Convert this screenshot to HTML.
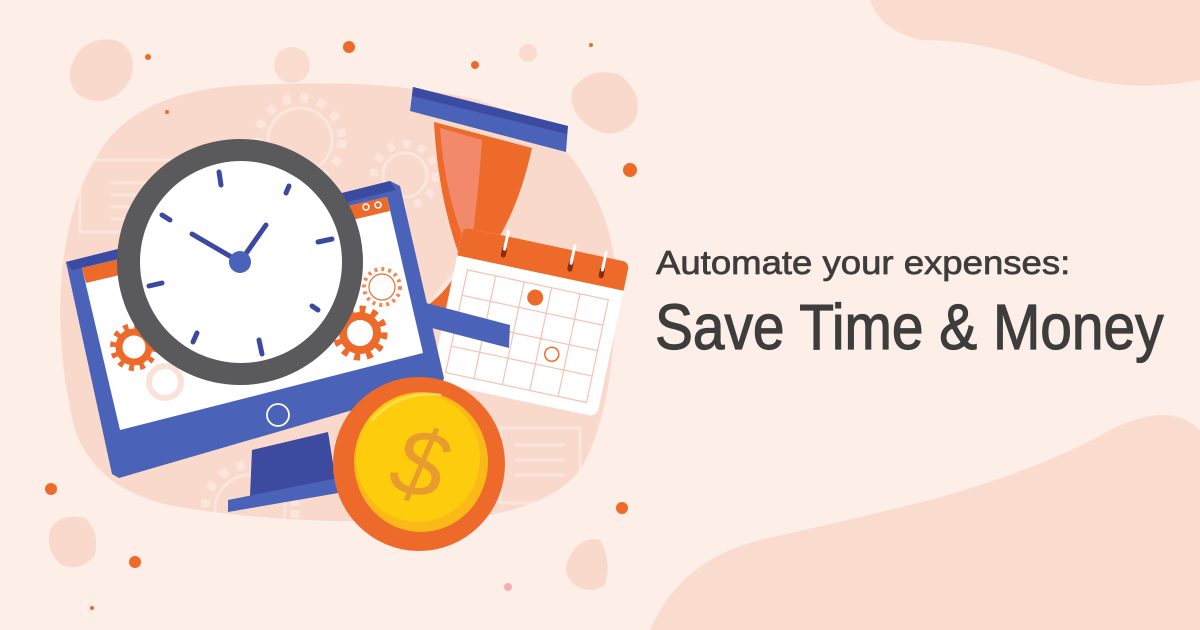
<!DOCTYPE html>
<html><head><meta charset="utf-8"><style>
html,body{margin:0;padding:0}
body{width:1200px;height:630px;background:#fdeee8;position:relative;overflow:hidden;font-family:"Liberation Sans",sans-serif}
svg{position:absolute;left:0;top:0}
.t1{position:absolute;left:656px;top:244px;font-size:33px;color:#3d3d3d;white-space:nowrap;transform-origin:0 0;transform:scaleX(1.107);-webkit-text-stroke:0.7px #3d3d3d}
.t2{position:absolute;left:655px;top:290px;font-size:64px;color:#3d3d3d;white-space:nowrap;transform-origin:0 0;transform:scaleX(0.888);-webkit-text-stroke:1.2px #3d3d3d}
</style></head><body>
<svg width="1200" height="630" viewBox="0 0 1200 630">
<path d="M870 0 L1200 0 L1200 80 Q1120 95 1060 70 Q990 40 920 40 Q880 30 870 0Z" fill="#fadccf"/>
<path d="M650 630 Q680 560 760 540 Q850 520 930 500 Q1040 470 1110 430 Q1170 400 1200 430 L1200 630Z" fill="#fadccf"/>
<path d="M95 160 Q130 90 250 85 Q360 80 420 90 Q520 100 565 150 Q625 220 615 320 Q610 420 580 470 Q540 520 420 520 Q300 525 200 510 Q100 500 75 430 Q55 350 62 270 Q70 200 95 160Z" fill="#f9d9cb"/>
<path d="M70 70 Q80 35 115 40 Q140 50 130 80 Q115 105 90 100 Q68 95 70 70Z" fill="#f9d9cb"/>
<path d="M572 90 Q590 65 620 75 Q645 95 635 120 Q620 140 595 130 Q568 115 572 90Z" fill="#f9d9cb"/>
<path d="M50 530 Q60 512 85 518 Q100 532 95 555 Q82 572 62 565 Q45 552 50 530Z" fill="#f9d9cb"/>
<path d="M568 560 Q580 535 600 540 Q612 560 605 585 Q590 595 575 585 Q562 575 568 560Z" fill="#f9d9cb"/>
<circle cx="292" cy="65" r="18" fill="#fadccf"/>
<circle cx="528" cy="53" r="9" fill="#fadccf"/>
<g fill="none" stroke="#fdeee8" stroke-width="3" opacity="0.6">
<rect x="80" y="160" width="92" height="72"/>
<line x1="110" y1="183" x2="160" y2="183"/><line x1="110" y1="195" x2="160" y2="195"/><line x1="110" y1="207" x2="160" y2="207"/><line x1="110" y1="219" x2="160" y2="219"/>
<rect x="500" y="428" width="80" height="75"/>
<line x1="515" y1="445" x2="565" y2="445"/><line x1="515" y1="460" x2="565" y2="460"/><line x1="515" y1="475" x2="565" y2="475"/>
<circle cx="300" cy="140" r="32"/><circle cx="300" cy="140" r="42" stroke-width="9" stroke-dasharray="8 10"/>
<circle cx="405" cy="175" r="22"/><circle cx="405" cy="175" r="31" stroke-width="8" stroke-dasharray="7 9"/>
<circle cx="250" cy="510" r="35"/><circle cx="250" cy="510" r="45" stroke-width="9" stroke-dasharray="8 10"/>
</g>
<g fill="#ee6a2b">
<circle cx="349" cy="47" r="6"/><circle cx="148" cy="57" r="3"/><circle cx="475" cy="65" r="4"/><circle cx="591" cy="45" r="2"/>
<circle cx="630" cy="170" r="7"/><circle cx="167" cy="112" r="2"/><circle cx="51" cy="489" r="6"/><circle cx="622" cy="508" r="6"/>
<circle cx="135" cy="562" r="6"/><circle cx="92" cy="608" r="2"/>
</g>
<circle cx="508" cy="587" r="4" fill="#f5b0b0"/>
<path d="M434 122 L532 148 Q515 225 480 263 L462 263 Q438 200 434 122Z" fill="#ee6a2b"/>
<path d="M440 128 L482 140 Q478 200 470 255 Q445 200 440 128Z" fill="#f2896b"/>
<path d="M462 262 L480 262 Q500 285 510 330 L424 310 Q440 285 462 262Z" fill="#fbe6de"/>
<path d="M462 262 L472 262 Q485 290 498 325 L424 308 Q450 290 462 262Z" fill="#ee6a2b"/>
<polygon points="413,87 568,126 566,152 410,111" fill="#4a62b8"/>
<polygon points="413,87 568,126 567,134 412,96" fill="#3b4ba2"/>
<g transform="translate(530 322) rotate(12)">
<rect x="-85" y="-79" width="170" height="158" rx="8" fill="#ffffff"/>
<path d="M-85 -71 Q-85 -79 -77 -79 L77 -79 Q85 -79 85 -71 L85 -50 L-85 -50Z" fill="#ee6a2b"/>
<g stroke="#f3c2b2" stroke-width="1.2" fill="none">
<rect x="-72" y="-38" width="144" height="105"/>
<line x1="-43" y1="-38" x2="-43" y2="67"/><line x1="-14" y1="-38" x2="-14" y2="67"/><line x1="14" y1="-38" x2="14" y2="67"/><line x1="43" y1="-38" x2="43" y2="67"/>
<line x1="-72" y1="-12" x2="72" y2="-12"/><line x1="-72" y1="14" x2="72" y2="14"/><line x1="-72" y1="40" x2="72" y2="40"/>
</g>
<circle cx="0" cy="-25" r="8" fill="#ee6a2b"/>
<circle cx="28" cy="27" r="7" fill="none" stroke="#ee6a2b" stroke-width="1.5"/>
<g stroke="#8a2a10" stroke-width="5" stroke-linecap="round"><line x1="-40" y1="-60" x2="-40" y2="-66"/><line x1="28" y1="-60" x2="28" y2="-66"/><line x1="60" y1="-60" x2="60" y2="-66"/></g>
<g stroke="#fff" stroke-width="3" stroke-linecap="round"><line x1="-40" y1="-66" x2="-40" y2="-84"/><line x1="28" y1="-66" x2="28" y2="-84"/><line x1="60" y1="-66" x2="60" y2="-84"/></g>
</g>
<polygon points="426,303 510,325 509,348 424,326" fill="#4a62b8"/>
<polygon points="252,450 328,432 336,482 250,496" fill="#3c4aa0"/>
<polygon points="228,500 338,478 344,492 228,512" fill="#4a62b8"/>
<polygon points="66,262 390,181 400,186 444,378 442,384 119,478 112,474" fill="#4a62b8"/>
<polygon points="66,262 390,181 396,190 72,270" fill="#3b4ba2"/>
<polygon points="82,268 387,197 423,353 120,430" fill="#ffffff"/>
<polygon points="82,268 387,197 390,211 86,283" fill="#ee6a2b"/>
<circle cx="366" cy="207" r="3" fill="none" stroke="#fff" stroke-width="1.5"/><circle cx="378" cy="205" r="3" fill="none" stroke="#fff" stroke-width="1.5"/>
<circle cx="278" cy="415" r="11" fill="none" stroke="#fff" stroke-width="1.8"/>
<circle cx="134" cy="347" r="15" fill="none" stroke="#ee6a2b" stroke-width="7"/>
<circle cx="134" cy="347" r="21" fill="none" stroke="#ee6a2b" stroke-width="6" stroke-dasharray="5 6"/>
<circle cx="360" cy="333" r="17" fill="none" stroke="#ee6a2b" stroke-width="8"/>
<circle cx="360" cy="333" r="24" fill="none" stroke="#ee6a2b" stroke-width="7" stroke-dasharray="6 6.5"/>
<circle cx="382" cy="287" r="13" fill="none" stroke="#ee6a2b" stroke-width="1.2"/>
<circle cx="382" cy="287" r="18" fill="none" stroke="#ee6a2b" stroke-width="4" stroke-dasharray="3 4" opacity="0.8"/>
<circle cx="165" cy="382" r="16" fill="none" stroke="#fbe2d8" stroke-width="6"/>
<circle cx="240" cy="262" r="123" fill="#5a5a5c"/>
<circle cx="241" cy="262" r="101" fill="#ffffff"/>
<g stroke="#3b4aa0" stroke-width="5" stroke-linecap="round">
<line x1="219" y1="172" x2="221" y2="185"/>
<line x1="286" y1="193" x2="289" y2="186"/>
<line x1="318" y1="242" x2="332" y2="239"/>
<line x1="312" y1="306" x2="318" y2="310"/>
<line x1="259" y1="340" x2="262" y2="354"/>
<line x1="193" y1="342" x2="197" y2="333"/>
<line x1="149" y1="286" x2="162" y2="283"/>
<line x1="162" y1="215" x2="170" y2="220"/>
<line x1="240" y1="262" x2="192" y2="234"/>
<line x1="240" y1="262" x2="266" y2="225"/>
</g>
<circle cx="240" cy="262" r="11" fill="#4a62b8"/>
<ellipse cx="419" cy="464" rx="86" ry="87" fill="#ee6a2b"/>
<ellipse cx="421" cy="462" rx="67" ry="70" fill="#fbb917"/>
<ellipse cx="418" cy="458" rx="62" ry="64" fill="#fdcc0c"/>
<path d="M372 420 Q400 390 440 395" stroke="#fee46a" stroke-width="3" fill="none" stroke-linecap="round" opacity="0.7"/>
<text x="420" y="496" font-family="Liberation Sans, sans-serif" font-size="95" font-style="italic" fill="#e89c2c" text-anchor="middle" transform="rotate(12 420 462)">$</text>
</svg>
<div class="t1">Automate your expenses:</div>
<div class="t2">Save Time &amp; Money</div>
</body></html>
